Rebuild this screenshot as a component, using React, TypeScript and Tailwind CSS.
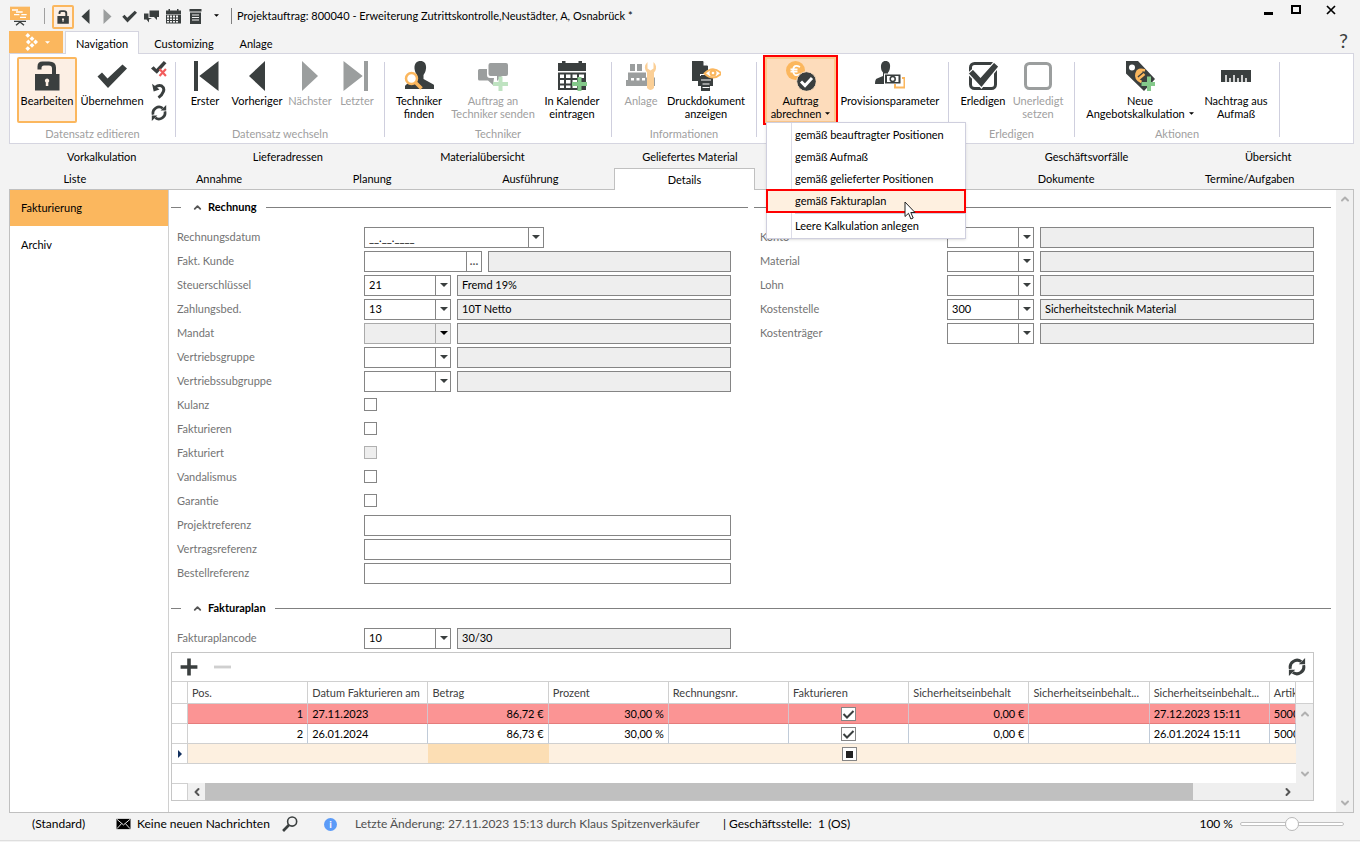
import { useState } from 'react';
import type { ReactNode } from 'react';
import { ChevronDown, ChevronLeft, ChevronRight, ChevronUp } from 'lucide-react';

type IconProps = { className?: string };

const svg = (children: ReactNode) =>
  function Icon({ className = 'w-[30px] h-[30px]' }: IconProps) {
    return (
      <svg viewBox="0 0 30 30" className={className} fill="currentColor" aria-hidden="true">
        {children}
      </svg>
    );
  };

const Unlock = svg(
  <>
    <path d="M5.500 8.500V5.500Q5.500 .5 10.500 .5H17Q24 .5 24 6.500v7h-4V7.500q0-3-3-3h-5q-2.500 0-2.500 2.500v1.500z" />
    <path fillRule="evenodd" d="M3 13h24.500v16.500H3zM15 17.500a2.200 2.200 0 0 0-1.200 4v3.500h2.500v-3.500a2.200 2.200 0 0 0-1.300-4z" />
  </>
);
const CheckBold = svg(<path d="M.5 15.500 5 11.500l5.500 6L25.500 3.500 30 7.500 11 27z" />);
const First = svg(<path d="M4 0h4v30H4zM28.500 0v30L9.300 15z" />);
const Prev = svg(<path d="M23 0v30L7 15z" />);
const Next = svg(<path d="M7 0v30L23 15z" />);
const Last = svg(<path d="M22 0h4v30h-4zM1.500 0v30L20.700 15z" />);

const CheckCross = svg(
  <>
    <path d="M0 14l5-4 5 5L24 0l5 4-18 20z" />
    <path d="M16 15l12 13M28 15L16 28" stroke="#f25c5c" strokeWidth="4" />
  </>
);
const UndoBold = svg(
  <>
    <path d="M8 8Q14 3 20 5.500q6 4 3 11-2 6-9 11" fill="none" stroke="currentColor" strokeWidth="5.500" />
    <path d="M2 1.500L5 16l11-4z" />
  </>
);
const Refresh = svg(
  <>
    <path d="M4 18A11.500 11.500 0 0 1 22 6M26 12A11.500 11.500 0 0 1 8 24" fill="none" stroke="currentColor" strokeWidth="5" />
    <path d="M18 10.500 28.500 10.500V0zM12 19.500 1.500 19.500v10.500z" />
  </>
);

const FindPerson = svg(
  <>
    <path d="M16.500 0c4 0 6 3 5.500 7.500-.3 3.500-1.500 5-2.500 6.500v4l10 5.500q1 1 1 4.500H1v-3q1-2 6-4.500l6-3v-3.500C11.500 12 10.800 10 10.500 7.500 10.200 3 12.500 0 16.500 0z" />
    <circle cx="7.500" cy="17.500" r="5.500" fill="#fff" stroke="#fbb75e" strokeWidth="2.500" />
    <path d="M11.500 21.500l6 6" stroke="#fbb75e" strokeWidth="3.500" />
  </>
);
const ChatPlus = svg(
  <>
    <path d="M1.500 8H9v6q0 3 3 3h2l2 0-1 7-5-4.500H1.500Q0 19.500 0 18V9.500Q0 8 1.500 8z" />
    <path d="M12.500 2H28q2 0 2 2v9q0 2-2 2h-4l-5 5v-5h-6.500q-2 0-2-2V4q0-2 2-2z" />
    <path d="M20.500 15.500h4v5.500H30v4h-5.500v5h-4v-5H15v-4h5.500z" fill="#bfe3c1" />
  </>
);
const CalendarPlus = svg(
  <>
    <path fillRule="evenodd" d="M1 2h4V0h3.500v2h13V0H25v2h4v8H1zM1 11.500h28V29H1zM3 13.500v3.500h4v-3.500zM9 13.500v3.500h4.500v-3.500zM15.500 13.500v3.500H20v-3.500zM22 13.500v3.500h5v-3.500zM3 19v3.500h4V19zM9 19v3.500h4.500V19zM15.500 19v3.500H20V19zM3 24.500V27h4v-2.500zM9 24.500V27h4.500v-2.500zM15.500 24.500V27H20v-2.500z" />
    <path d="M20.500 16h4v5H30v4h-5.500v5h-4v-5H15v-4h5.500z" fill="#84c98a" />
  </>
);
const Plant = svg(
  <>
    <path fillRule="evenodd" d="M4 3h5v7H4zM11 3h5v7h-5zM2 11.500h18v5h9V25H0v-6h2zM5 17v2.500h3V17zM10.500 17v2.500h3V17zM16 17v2.500h3V17z" />
    <path d="M21.500 1v6.500l3 2 3-2V1q5 5 .5 10.500V27q-3.500 4-7 0V11.500Q16.500 6 21.500 1z" fill="#fbcf96" />
  </>
);
const PrintPreview = svg(
  <>
    <path d="M1 0h11l5 5v8H9v7H1z" />
    <path d="M12.500 0v4.500H17z" fill="#fff" />
    <path d="M8 15h14v10h-3v5h-9v-5H7V16zM10 14h10v3H10z" />
    <path d="M10 19h10M11.500 23h7M11.500 26.500h7" stroke="#fff" strokeWidth="1.200" />
    <path d="M13.500 12.500q8.500-8.500 17 0-8.500 8-17 0z" fill="#fff" stroke="#fbb75e" strokeWidth="1.800" />
    <circle cx="22" cy="12" r="3.500" fill="#fbb75e" />
    <circle cx="22" cy="12" r="1.300" fill="#fff" />
  </>
);
const EuroCheck = svg(
  <>
    <circle cx="9.500" cy="9.500" r="9.500" fill="#fbb75e" />
    <path d="M14 6Q7.500 2.500 7 9.500q.5 7 7 3.500M4.500 8.300h7M4.500 10.700h7" stroke="#fff" strokeWidth="1.700" fill="none" />
    <circle cx="20.500" cy="20.500" r="9.800" stroke="#fde0c2" />
    <path d="M15 20.500l4 4 7-7.500" stroke="#fff" strokeWidth="3" fill="none" />
  </>
);
const PersonMoney = svg(
  <>
    <path d="M10.500 0c3.500 0 5 2.500 4.500 6.500-.2 2.500-1 4-2 5v3l3 1.500v7H0q0-5 2-5.500l6-2.500v-3.500C6.500 10 6.200 8.500 6 6.500 5.700 2.500 7.500 0 10.500 0z" />
    <path d="M9 12.500h17v11H9z" fill="#fff" />
    <path fillRule="evenodd" d="M10 13.500h15.500v9H10zM12 15v6h11.500v-6z" />
    <circle cx="17.700" cy="18" r="2.500" fill="#fff" stroke="currentColor" strokeWidth="1.500" />
    <path d="M27 17h2.500v9.500H20V23" fill="none" stroke="#fbb75e" strokeWidth="2" />
  </>
);
const BoxChecked = svg(
  <>
    <rect x="2.500" y="2.500" width="25" height="25" rx="4" fill="none" stroke="currentColor" strokeWidth="3" />
    <path d="M0 12.500l5-4.500 7.500 8L26 1l5 4.500L13.500 27z" stroke="#fff" strokeWidth="1.200" />
  </>
);
const BoxEmpty = svg(
  <rect x="2.500" y="2.500" width="25" height="25" rx="4" fill="none" stroke="currentColor" strokeWidth="3" />
);
const TagPlus = svg(
  <>
    <path fillRule="evenodd" d="M1 0h12l17 18-11 12L1 12.500zM7 3.500a3 3 0 1 0 0 6 3 3 0 0 0 0-6z" />
    <path d="M20 9.500Q13 7 11.500 12.500t5 8.500M11 15l6-5M13.500 18l6-5" stroke="#fbb75e" strokeWidth="2.500" fill="none" />
    <path d="M22 15.500h4V21h5v4h-5v5h-4v-5h-5.500v-4H22z" fill="#84c98a" />
  </>
);
const Ruler = svg(
  <>
    <path d="M0 9h30v12H0z" />
    <path d="M5 21v-7M9 21v-4M13 21v-7M17 21v-4M21 21v-7M25 21v-4" stroke="#fff" strokeWidth="1.500" />
  </>
);

const Board = svg(
  <>
    <path d="M0 1h30v20H0z" fill="#fbb75e" />
    <path d="M3 6h9M9 9h10M6 13h8M17 13h8M15 17h9" stroke="#fff" strokeWidth="2" />
    <path d="M6 23h18M15 22v3M15 24l-6 5M15 24l6 5" stroke="#3a3f3f" strokeWidth="2" />
  </>
);
const Chats = svg(
  <>
    <path d="M11 3h19v13h-4v6l-6-6h-9z" />
    <path d="M0 9h9v9h7l-6 3v6l-5-6H0z" />
  </>
);
const Calendar = svg(
  <path fillRule="evenodd" d="M0 3h5V0h3v3h14V0h3v3h5v7H0zM0 11h30v18H0zM2 13v4h4v-4zM8 13v4h4v-4zM14 13v4h4v-4zM20 13v4h4v-4zM2 19v3h4v-3zM8 19v3h4v-3zM14 19v3h4v-3zM20 19v3h4v-3zM2 24v3h4v-3zM8 24v3h4v-3zM14 24v3h4v-3zM20 24v3h4v-3z" />
);
const Notes = svg(
  <>
    <path d="M3 0h24v5H3zM4 7h22v23H4z" />
    <path d="M8 12h14M8 17h14M8 22h14" stroke="#f3f3f3" strokeWidth="2" />
  </>
);
const Logo = svg(
  <path fill="#fff" d="M8 0l4 4-4 4-4-4zM15 5.500l4 4-4 4-4-4zM21 11l4 4-4 4-4-4zM9 11l4 4-4 4-4-4zM15 16.500l4 4-4 4-4-4zM8 22l4 4-4 4-4-4z" />
);
const Plus = svg(<path d="M12 1h6v11h11v6H18v11h-6V18H1v-6h11z" />);
const Minus = svg(<path d="M0 12.500h30v5H0z" />);
const Mail = svg(
  <>
    <path d="M0 4h30v22H0z" />
    <path d="M1 5l14 12L29 5M1 25l10-11M29 25L19 14" stroke="#f3f3f3" strokeWidth="2" fill="none" />
  </>
);
const Search = svg(
  <>
    <circle cx="19" cy="10.500" r="8.500" fill="none" stroke="currentColor" strokeWidth="3" />
    <path d="M13 17L2 28" stroke="currentColor" strokeWidth="5" />
  </>
);

function Caret({ className = 'w-2 h-1' }: IconProps) {
  return (
    <svg viewBox="0 0 8 4" className={className} fill="currentColor" aria-hidden="true">
      <path d="M0 0h8L4 4z" />
    </svg>
  );
}

type RibbonButtonProps = {
  icon: (p: IconProps) => ReactNode;
  lines: string[];
  width: string;
  disabled?: boolean;
  menu?: boolean;
  frame?: string;
};

function RibbonButton({ icon: Icon, lines, width, disabled, menu, frame = 'border-transparent' }: RibbonButtonProps) {
  return (
    <button
      disabled={disabled}
      className={`${width} ${frame} h-[66px] shrink-0 border-2 flex flex-col items-center pt-[2px] ${
        disabled ? 'text-[#9b9e9e]' : 'text-[#3a3f3f]'
      }`}
    >
      <Icon className="w-[30px] h-[30px] shrink-0" />
      <span className={`mt-[3px] leading-[13px] whitespace-nowrap ${disabled ? 'text-[#a0a0a0]' : 'text-black'}`}>
        {lines.map((line, i) => (
          <span key={line} className="flex items-center justify-center gap-1">
            {line}
            {menu && i === lines.length - 1 && <Caret className="w-[5px] h-[3px]" />}
          </span>
        ))}
      </span>
    </button>
  );
}

function RibbonGroup({ title, width, pad, children }: { title: string; width: string; pad: string; children: ReactNode }) {
  return (
    <div className="flex shrink-0">
      <div className={`${width} flex flex-col`}>
        <div className={`flex pt-[3px] ${pad}`}>{children}</div>
        <div className="mt-[3px] text-center leading-4 text-[#a0a0a0]">{title}</div>
      </div>
      <div className="w-px h-[75px] mt-2 bg-[#cfcfde]" />
    </div>
  );
}

const menuItems = ['gemäß beauftragter Positionen', 'gemäß Aufmaß', 'gemäß gelieferter Positionen', 'gemäß Fakturaplan'];

function BillingMenu() {
  return (
    <div role="menu" className="absolute z-20 left-[3px] top-[65px] w-[200px] pt-px border border-[#cfcfde] bg-white shadow-sm">
      <div className="absolute left-6 inset-y-0 w-px bg-[#dcdce8]" />
      {menuItems.map((item) => {
        const active = item === 'gemäß Fakturaplan';
        return (
          <button
            key={item}
            role="menuitem"
            className={`relative block w-full h-[22px] pl-7 text-left ${
              active ? 'bg-[#fef0e0] outline-2 -outline-offset-1 outline-[#f00]' : ''
            }`}
          >
            {item}
          </button>
        );
      })}
      <div className="ml-7 mt-px border-t border-[#cfcfde]" />
      <button role="menuitem" className="relative block w-full h-6 pl-7 text-left">
        Leere Kalkulation anlegen
      </button>
      <svg viewBox="0 0 12 19" className="absolute left-[137px] top-[78px] w-3 h-[19px]" aria-hidden="true">
        <path d="M1 1v14.500l3.500-3.200 2.400 5.700 2.300-1-2.400-5.500H11z" fill="#fff" stroke="#222" />
      </svg>
    </div>
  );
}

function TitleBar() {
  const quick = [
    { label: 'Vorheriger', icon: Prev },
    { label: 'Nächster', icon: Next, off: true },
    { label: 'Übernehmen', icon: CheckBold },
    { label: 'Nachricht', icon: Chats },
    { label: 'Kalender', icon: Calendar },
    { label: 'Notizen', icon: Notes },
  ];
  return (
    <header className="flex items-center h-[31px] pl-[10px] pr-6 text-[#3a3f3f]">
      <Board className="w-5 h-5" />
      <div className="w-px h-4 ml-[14px] mr-[7px] bg-[#a0a0a0]" />
      <button aria-label="Bearbeiten" className="w-[22px] h-6 mt-[2px] flex items-center justify-center border-2 border-[#fbb75e] bg-[#fcefe4] rounded-xs">
        <Unlock className="w-[14px] h-[14px]" />
      </button>
      {quick.map(({ label, icon: Icon, off }) => (
        <button key={label} aria-label={label} className={`w-[22px] mt-[2px] flex justify-center ${off ? 'text-[#9b9e9e]' : ''}`}>
          <Icon className="w-[15px] h-[15px]" />
        </button>
      ))}
      <button aria-label="Schnellzugriff anpassen" className="w-5 flex justify-center text-black">
        <Caret className="w-[5px] h-[3px]" />
      </button>
      <div className="w-px h-4 mx-[5px] bg-[#808080]" />
      <h1 className="text-black whitespace-nowrap">
        Projektauftrag: 800040 - Erweiterung Zutrittskontrolle,Neustädter, A, Osnabrück *
      </h1>
      <div className="ml-auto flex items-center -mt-3 text-black">
        <button aria-label="Minimieren" className="w-[9px] h-[10px] mr-[18px] flex items-end">
          <span className="w-full h-[3px] bg-black" />
        </button>
        <button aria-label="Maximieren" className="w-[10px] h-[9px] mr-[25px] border-2 border-black" />
        <button aria-label="Schließen">
          <svg viewBox="0 0 10 10" className="w-[10px] h-[10px]" stroke="currentColor" strokeWidth="1.700">
            <path d="M1 1l8 8M9 1L1 9" />
          </svg>
        </button>
      </div>
    </header>
  );
}

function Ribbon() {
  return (
    <div className="flex h-[91px] border border-[#d5d5e0] bg-white">
      <RibbonGroup title="Datensatz editieren" width="w-[165px]" pad="pl-[7px]">
        <RibbonButton icon={Unlock} lines={['Bearbeiten']} width="w-[60px]" frame="border-[#fbb75e] bg-[#fcefe4] rounded-xs" />
        <RibbonButton icon={CheckBold} lines={['Übernehmen']} width="w-[70px]" />
        <div className="w-6 pt-1 flex flex-col items-center gap-[6px] text-[#3a3f3f]">
          <button aria-label="Verwerfen"><CheckCross className="w-4 h-4" /></button>
          <button aria-label="Rückgängig"><UndoBold className="w-4 h-4" /></button>
          <button aria-label="Aktualisieren"><Refresh className="w-4 h-4" /></button>
        </div>
      </RibbonGroup>
      <RibbonGroup title="Datensatz wechseln" width="w-[208px]" pad="pl-[3px]">
        <RibbonButton icon={First} lines={['Erster']} width="w-[52px]" />
        <RibbonButton icon={Prev} lines={['Vorheriger']} width="w-[52px]" />
        <RibbonButton icon={Next} lines={['Nächster']} width="w-[54px]" disabled />
        <RibbonButton icon={Last} lines={['Letzter']} width="w-[40px]" disabled />
      </RibbonGroup>
      <RibbonGroup title="Techniker" width="w-[226px]" pad="pl-[3px]">
        <RibbonButton icon={FindPerson} lines={['Techniker', 'finden']} width="w-[62px]" />
        <RibbonButton icon={ChatPlus} lines={['Auftrag an', 'Techniker senden']} width="w-[86px]" disabled />
        <RibbonButton icon={CalendarPlus} lines={['In Kalender', 'eintragen']} width="w-[72px]" />
      </RibbonGroup>
      <RibbonGroup title="Informationen" width="w-[144px]" pad="pl-2">
        <RibbonButton icon={Plant} lines={['Anlage']} width="w-[42px]" disabled />
        <RibbonButton icon={PrintPreview} lines={['Druckdokument', 'anzeigen']} width="w-[88px]" />
      </RibbonGroup>
      <RibbonGroup title="" width="w-[191px]" pad="pl-[6px]">
        <div className="relative px-[2px]">
          <RibbonButton
            icon={EuroCheck}
            lines={['Auftrag', 'abrechnen']}
            width="w-[71px]"
            menu
            frame="border-[#fcc88c] bg-[#fddcbb] outline-2 outline-[#f00]"
          />
          <BillingMenu />
        </div>
        <RibbonButton icon={PersonMoney} lines={['Provisionsparameter']} width="w-[104px]" />
      </RibbonGroup>
      <RibbonGroup title="Erledigen" width="w-[125px]" pad="pl-[6px]">
        <RibbonButton icon={BoxChecked} lines={['Erledigen']} width="w-[56px]" />
        <RibbonButton icon={BoxEmpty} lines={['Unerledigt', 'setzen']} width="w-[54px]" disabled />
      </RibbonGroup>
      <RibbonGroup title="Aktionen" width="w-[204px]" pad="pl-[7px]">
        <RibbonButton icon={TagPlus} lines={['Neue', 'Angebotskalkulation']} width="w-[116px]" menu />
        <RibbonButton icon={Ruler} lines={['Nachtrag aus', 'Aufmaß']} width="w-[76px]" />
      </RibbonGroup>
    </div>
  );
}

function PageTabs() {
  const upper = ['Vorkalkulation', 'Lieferadressen', 'Materialübersicht', 'Geliefertes Material', '', 'Geschäftsvorfälle', 'Übersicht'];
  const lower = ['Liste', 'Annahme', 'Planung', 'Ausführung', 'Details', '', 'Dokumente', 'Termine/Aufgaben'];
  return (
    <nav className="leading-5 pr-1">
      <div className="grid h-[23px] pt-[2px] grid-cols-[186fr_187fr_203fr_213fr_191fr_200fr_164fr]">
        {upper.map((t, i) => (t ? <button key={i}>{t}</button> : <span key={i} />))}
      </div>
      <div className="grid h-[22px] pt-px grid-cols-[132fr_157fr_150fr_167fr_142fr_228fr_167fr_201fr]">
        {lower.map((t, i) =>
          t ? (
            <button
              key={i}
              className={t === 'Details' ? 'relative z-10 h-[22px] bg-white border border-b-0 border-[#c0c0c0]' : ''}
            >
              {t}
            </button>
          ) : (
            <span key={i} />
          )
        )}
      </div>
    </nav>
  );
}

function SectionTitle({ children }: { children?: string }) {
  return (
    <div className="flex items-center h-6">
      <div className="w-[10px] h-px bg-[#808080]" />
      {children && (
        <h2 className="flex items-center mr-[9px] font-bold">
          <ChevronUp className="w-[11px] h-[11px] ml-[11px] mr-[5px] text-[#555]" strokeWidth={4} />
          {children}
        </h2>
      )}
      <div className="flex-1 h-px bg-[#808080]" />
    </div>
  );
}

const field = 'h-[21px] border border-[#858585] px-1 min-w-0 outline-none';

function Row({ id, label, children }: { id: string; label: string; children: ReactNode }) {
  return (
    <div className="flex items-center h-6 pl-[6px]">
      <label htmlFor={id} className="w-[187px] shrink-0 text-[#737373]">
        {label}
      </label>
      {children}
    </div>
  );
}

type ComboProps = { id: string; label: string; value?: string; text?: string; disabled?: boolean };

function ComboRow({ id, label, value = '', text = '', disabled }: ComboProps) {
  return (
    <Row id={id} label={label}>
      <div className="relative mr-[6px]">
        <select
          id={id}
          disabled={disabled}
          defaultValue={value}
          className={`${field} block w-[87px] appearance-none ${disabled ? 'bg-[#eee] border-[#aaa]' : 'bg-white'}`}
        >
          <option value={value}>{value}</option>
        </select>
        <span
          className={`absolute right-0 top-0 w-4 h-[21px] flex items-center justify-center border-l pointer-events-none ${
            disabled ? 'border-[#aaa]' : 'border-[#858585] text-[#3a3f3f]'
          }`}
        >
          <Caret />
        </span>
      </div>
      <input readOnly aria-label={`${label} Bezeichnung`} value={text} className={`${field} w-[274px] pb-[2px] bg-[#eee]`} />
    </Row>
  );
}

function CheckRow({ id, label, disabled }: { id: string; label: string; disabled?: boolean }) {
  return (
    <Row id={id} label={label}>
      <input
        id={id}
        type="checkbox"
        disabled={disabled}
        className={`appearance-none w-[13px] h-[13px] mb-[2px] border ${
          disabled ? 'border-[#b0b0b0] bg-[#eee]' : 'border-[#858585] bg-white checked:bg-[#3a3f3f]'
        }`}
      />
    </Row>
  );
}

function InvoiceForm() {
  return (
    <div>
      <Row id="datum" label="Rechnungsdatum">
        <input id="datum" defaultValue="__.__.____" className={`${field} w-[165px] bg-white`} />
        <button aria-label="Datum wählen" className="w-[15px] h-[21px] border border-l-0 border-[#858585] flex items-center justify-center text-[#3a3f3f]">
          <Caret />
        </button>
      </Row>
      <Row id="kunde" label="Fakt. Kunde">
        <input id="kunde" className={`${field} w-[103px] bg-white`} />
        <button aria-label="Kunde suchen" className="w-[15px] h-[21px] mr-[6px] border border-l-0 border-[#858585] font-bold text-[#555]">
          …
        </button>
        <input readOnly aria-label="Kundenname" className={`${field} w-[243px] bg-[#eee]`} />
      </Row>
      <ComboRow id="steuer" label="Steuerschlüssel" value="21" text="Fremd 19%" />
      <ComboRow id="zahlung" label="Zahlungsbed." value="13" text="10T Netto" />
      <ComboRow id="mandat" label="Mandat" disabled />
      <ComboRow id="gruppe" label="Vertriebsgruppe" />
      <ComboRow id="subgruppe" label="Vertriebssubgruppe" />
      <CheckRow id="kulanz" label="Kulanz" />
      <CheckRow id="fakturieren" label="Fakturieren" />
      <CheckRow id="fakturiert" label="Fakturiert" disabled />
      <CheckRow id="vandalismus" label="Vandalismus" />
      <CheckRow id="garantie" label="Garantie" />
      {['Projektreferenz', 'Vertragsreferenz', 'Bestellreferenz'].map((name) => (
        <Row key={name} id={name} label={name}>
          <input id={name} className={`${field} w-[367px] bg-white`} />
        </Row>
      ))}
    </div>
  );
}

const columns = [
  'Pos.',
  'Datum Fakturieren am',
  'Betrag',
  'Prozent',
  'Rechnungsnr.',
  'Fakturieren',
  'Sicherheitseinbehalt',
  'Sicherheitseinbehalt...',
  'Sicherheitseinbehalt...',
  'Artikel',
];

const plan = [
  { pos: '1', date: '27.11.2023', amount: '86,72 €', percent: '30,00 %', held: '0,00 €', until: '27.12.2023 15:11', item: '5000', late: true },
  { pos: '2', date: '26.01.2024', amount: '86,73 €', percent: '30,00 %', held: '0,00 €', until: '26.01.2024 15:11', item: '5000', late: false },
];

function CellCheck({ label, defaultOn }: { label: string; defaultOn: boolean }) {
  const [on, setOn] = useState(defaultOn);
  return (
    <span className="relative inline-flex align-middle">
      <input
        type="checkbox"
        aria-label={label}
        checked={on}
        onChange={() => setOn(!on)}
        className="appearance-none w-[15px] h-[14px] bg-white border border-[#858585]"
      />
      {on && (
        <svg viewBox="0 0 15 14" className="absolute inset-0 w-[15px] h-[14px] pointer-events-none" fill="none" stroke="#3a3f3f" strokeWidth="2">
          <path d="M2.500 7l3.500 3.500L12.500 4" />
        </svg>
      )}
    </span>
  );
}

function PlanTable() {
  const cell = 'h-5 px-1 overflow-hidden whitespace-nowrap border-b border-r';
  return (
    <div className="mr-[17px] mt-[2px] border border-[#c6c6c6] bg-white">
      <div className="flex items-center h-7 pl-2 pr-[7px] text-[#3a3f3f]">
        <button aria-label="Zeile hinzufügen"><Plus className="w-[18px] h-[18px]" /></button>
        <button aria-label="Zeile löschen" className="ml-4 text-[#cfcfcf]" disabled><Minus className="w-[17px] h-[18px]" /></button>
        <button aria-label="Neu laden" className="ml-auto"><Refresh className="w-[18px] h-[18px]" /></button>
      </div>
      <div className="flex border-t border-[#d0d0d0]">
        <div className="flex-1 min-w-0">
          <table className="w-full table-fixed border-separate border-spacing-0">
            <colgroup>
              <col className="w-4" />
              {columns.map((_, i) => (
                <col key={i} className={i === 9 ? 'w-[26px]' : 'w-[120px]'} />
              ))}
            </colgroup>
            <thead>
              <tr>
                <th className="h-[22px] border-b border-r border-[#d0d0d0]" />
                {columns.map((c, i) => (
                  <th key={i} className="px-1 text-left font-normal text-[#404040] overflow-hidden whitespace-nowrap border-b border-r border-[#d0d0d0]">
                    {c}
                  </th>
                ))}
              </tr>
            </thead>
            <tbody>
              {plan.map((r) => {
                const tone = r.late ? 'bg-[#fb9494] border-b-[#e57c7c] border-r-[#d4c4cc]' : 'border-b-[#d0d0d0] border-r-[#c0cbd8]';
                return (
                  <tr key={r.pos}>
                    <td className="border-b border-r border-[#d0d0d0]" />
                    <td className={`${cell} ${tone} text-right`}>{r.pos}</td>
                    <td className={`${cell} ${tone}`}>{r.date}</td>
                    <td className={`${cell} ${tone} text-right`}>{r.amount}</td>
                    <td className={`${cell} ${tone} text-right`}>{r.percent}</td>
                    <td className={`${cell} ${tone}`} />
                    <td className={`${cell} ${tone} text-center leading-none`}>
                      <CellCheck label={`Position ${r.pos} fakturieren`} defaultOn />
                    </td>
                    <td className={`${cell} ${tone} text-right`}>{r.held}</td>
                    <td className={`${cell} ${tone}`} />
                    <td className={`${cell} ${tone}`}>{r.until}</td>
                    <td className={`${cell} ${tone}`}>{r.item}</td>
                  </tr>
                );
              })}
              <tr>
                <td className="border-b border-r border-[#d0d0d0]">
                  <svg viewBox="0 0 4 8" className="mx-auto w-1 h-2" fill="#12305e" aria-hidden="true">
                    <path d="M0 0l4 4-4 4z" />
                  </svg>
                </td>
                {columns.map((_, i) => (
                  <td key={i} className={`h-5 border-b border-[#d0d0d0] text-center leading-none ${i === 2 ? 'bg-[#fcdeb4]' : 'bg-[#fdf0e0]'}`}>
                    {i === 5 && (
                      <span className="relative inline-flex align-middle">
                        <input type="checkbox" aria-label="Neue Position fakturieren" className="appearance-none w-[15px] h-[14px] bg-white border border-[#858585]" />
                        <span className="absolute left-1 top-1 w-[7px] h-[7px] bg-[#222] pointer-events-none" />
                      </span>
                    )}
                  </td>
                ))}
              </tr>
            </tbody>
          </table>
          <div className="h-[19px]" />
          <div className="flex h-[17px] text-[#555]">
            <div className="w-4 border-t border-r border-[#d0d0d0]" />
            <div className="w-[17px] flex items-center justify-center bg-[#f0f0f0]"><ChevronLeft className="w-3 h-3" strokeWidth={4} /></div>
            <div className="flex-1 bg-[#efefef]"><div className="w-[92%] h-full bg-[#c0c0c0]" /></div>
            <div className="w-[17px] flex items-center justify-center bg-[#efefef]"><ChevronRight className="w-3 h-3" strokeWidth={4} /></div>
          </div>
        </div>
        <div className="w-[17px] flex flex-col text-[#b0b0b0]">
          <div className="h-[22px] border-b border-[#d0d0d0]" />
          <div className="flex-1 flex flex-col items-center justify-between bg-[#efefef] pt-1 pb-5">
            <ChevronUp className="w-3 h-3" strokeWidth={4} />
            <ChevronDown className="w-3 h-3" strokeWidth={4} />
          </div>
        </div>
      </div>
    </div>
  );
}

function StatusBar() {
  return (
    <footer className="flex items-center h-[27px] pb-[5px] pr-[10px] text-[12px] whitespace-nowrap">
      <span className="w-[84px] pl-[23px]">(Standard)</span>
      <button className="w-[166px] ml-[23px] flex items-center gap-[6px]">
        <Mail className="w-[15px] h-[14px]" />
        Keine neuen Nachrichten
      </button>
      <button aria-label="Suchen" className="text-[#3a3f3f]"><Search className="w-4 h-4" /></button>
      <span className="w-[13px] h-[13px] ml-[26px] mr-[18px] rounded-full bg-[#5b9bf8] text-white text-[10px] leading-[13px] text-center font-bold">i</span>
      <span className="w-[368px] text-[#505050]">Letzte Änderung: 27.11.2023 15:13 durch Klaus Spitzenverkäufer</span>
      <span>| Geschäftsstelle:&nbsp; 1 (OS)</span>
      <label htmlFor="zoom" className="ml-auto mr-[7px]">100 %</label>
      <input
        id="zoom"
        type="range"
        className="appearance-none w-[104px] h-1 rounded-full border border-[#c0c0c0] bg-white [&::-webkit-slider-thumb]:appearance-none [&::-webkit-slider-thumb]:w-[14px] [&::-webkit-slider-thumb]:h-[14px] [&::-webkit-slider-thumb]:rounded-full [&::-webkit-slider-thumb]:border [&::-webkit-slider-thumb]:border-[#b8b8b8] [&::-webkit-slider-thumb]:bg-white"
      />
    </footer>
  );
}

export default function App() {
  return (
    <div className="min-h-screen flex flex-col overflow-hidden bg-[#f3f3f3] text-black text-[11px] leading-4 font-['Lato',sans-serif]">
      <TitleBar />
      <div className="flex flex-col flex-1 pl-[9px] pr-[6px]">
        <div className="flex h-[22px]">
          <button aria-label="Menü" className="w-[54px] flex items-center justify-center gap-1 bg-[#fbb75e] text-white">
            <Logo className="w-[18px] h-[18px]" />
            <Caret className="w-[5px] h-[3px]" />
          </button>
          <button className="relative w-[74px] h-[23px] ml-[2px] pt-[2px] bg-white border border-b-0 border-[#d5d5e0]">Navigation</button>
          <button className="w-[90px] pt-[3px]">Customizing</button>
          <button className="w-[54px] pt-[3px]">Anlage</button>
          <button aria-label="Hilfe" className="ml-auto mr-[6px] -mt-1 text-[20px] leading-5 text-[#3a3f3f]">?</button>
        </div>
        <Ribbon />
        <PageTabs />
        <div className="flex flex-1 border border-[#c0c0c0] bg-white">
          <aside className="w-[159px] shrink-0 flex flex-col border-r border-[#d0d0d0]">
            <button className="h-9 pl-[11px] text-left bg-[#fbb75e]">Fakturierung</button>
            <button className="h-[38px] pl-[11px] text-left">Archiv</button>
          </aside>
          <main className="flex-1 min-w-0 pl-[2px] pr-[5px] pt-[5px]">
            <div className="grid grid-cols-2 gap-x-[6px]">
              <section>
                <SectionTitle>Rechnung</SectionTitle>
                <div className="h-[6px]" />
                <InvoiceForm />
              </section>
              <section>
                <SectionTitle />
                <div className="h-[6px]" />
                <ComboRow id="konto" label="Konto" />
                <ComboRow id="material" label="Material" />
                <ComboRow id="lohn" label="Lohn" />
                <ComboRow id="kostenstelle" label="Kostenstelle" value="300" text="Sicherheitstechnik Material" />
                <ComboRow id="kostentraeger" label="Kostenträger" />
              </section>
            </div>
            <section className="pt-[11px]">
              <SectionTitle>Fakturaplan</SectionTitle>
              <div className="h-[6px]" />
              <ComboRow id="plancode" label="Fakturaplancode" value="10" text="30/30" />
              <PlanTable />
            </section>
          </main>
          <div className="w-[17px] flex flex-col items-center justify-between py-[3px] bg-[#f0f0f0] text-[#b0b0b0]">
            <ChevronUp className="w-3 h-3" strokeWidth={4} />
            <ChevronDown className="w-3 h-3" strokeWidth={4} />
          </div>
        </div>
        <StatusBar />
      </div>
      <div className="h-[2px] border-t border-[#dedede]" />
    </div>
  );
}
